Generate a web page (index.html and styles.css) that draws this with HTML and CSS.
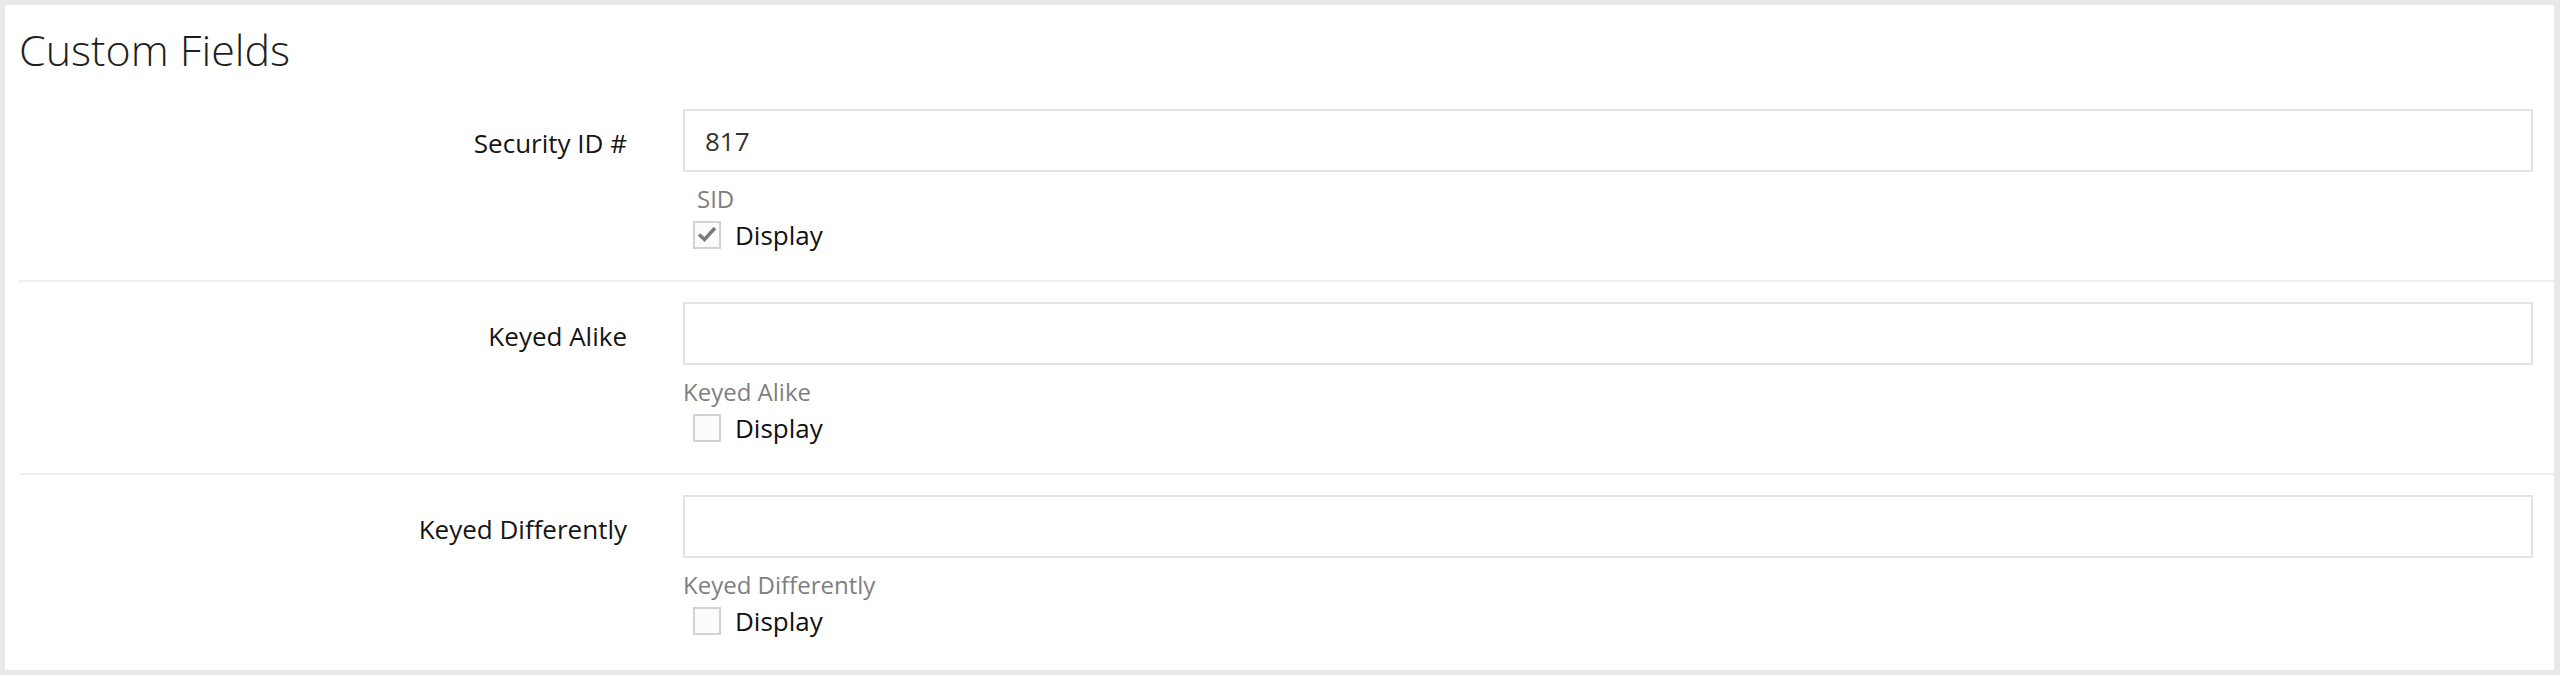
FILE: index.html
```html
<!DOCTYPE html>
<html lang="en">
<head>
<meta charset="UTF-8" />
<meta name="viewport" content="width=device-width, initial-scale=1" />
<title>Custom Fields</title>
<link rel="stylesheet" href="styles.css">
</head>
<body>

<div class="panel">
  <h2>Custom Fields</h2>

  <!-- Security ID -->
  <div class="field-row">
    <label class="field-label" for="cf-sid">Security ID #</label>
    <div class="field-body">
      <input type="text" id="cf-sid" class="field-input" value="817" />
      <div class="help help-indent">SID</div>
      <div class="check-line">
        <span class="box checked">
          <svg viewBox="0 0 24 24" width="24" height="24"><path d="M4 11.5 L9.5 16.5 L20 5" fill="none" stroke="#7b7b7b" stroke-width="3.5"/></svg>
        </span>
        <span class="check-text">Display</span>
      </div>
    </div>
  </div>

  <!-- Keyed Alike -->
  <div class="field-row">
    <label class="field-label" for="cf-ka">Keyed Alike</label>
    <div class="field-body">
      <input type="text" id="cf-ka" class="field-input" value="" />
      <div class="help">Keyed Alike</div>
      <div class="check-line">
        <span class="box"></span>
        <span class="check-text">Display</span>
      </div>
    </div>
  </div>

  <!-- Keyed Differently -->
  <div class="field-row last">
    <label class="field-label" for="cf-kd">Keyed Differently</label>
    <div class="field-body">
      <input type="text" id="cf-kd" class="field-input" value="" />
      <div class="help">Keyed Differently</div>
      <div class="check-line">
        <span class="box"></span>
        <span class="check-text">Display</span>
      </div>
    </div>
  </div>

</div>

</body>
</html>
```

FILE: styles.css
```css
body {
  margin: 0;
  padding: 5px 6px 5px 5px;
  background: #e8e8e8;
  font-family: "Open Sans", Arial, sans-serif;
  height: 100vh;
  box-sizing: border-box;
}
.panel {
  background: white;
  height: 100%;
  padding: 16px 0 0 14px;
  box-sizing: border-box;
}
h2 {
  margin: 0 0 11px;
  font-size: 43px;
  font-weight: 300;
  line-height: 57px;
  color: #1e1e1e;
}
.field-row {
  display: grid;
  grid-template-columns: 664px 1fr;
  padding: 20px 21px 27px 0;
  border-bottom: 2px solid #efefef;
}
.field-row.last {
  border-bottom: none;
}
.field-label {
  text-align: right;
  padding: 3px 56px 0 0;
  font-size: 26px;
  line-height: 63px;
  color: #151515;
}
.field-input {
  display: block;
  width: 100%;
  height: 63px;
  box-sizing: border-box;
  border: 2px solid #e4e4e4;
  padding: 0 20px;
  font-family: "Open Sans", Arial, sans-serif;
  font-size: 26px;
  color: #333;
  outline: none;
}
.help {
  margin-top: 10px;
  font-size: 24px;
  line-height: 33px;
  color: #7f7f7f;
}
.help-indent {
  padding-left: 14px;
}
.check-line {
  display: flex;
  align-items: center;
  margin-top: 2px;
  padding-left: 10px;
  height: 36px;
}
.box {
  width: 28px;
  height: 28px;
  box-sizing: border-box;
  border: 2px solid #d2d2d2;
  background: #fbfbfb;
  display: flex;
}
.check-text {
  margin-left: 14px;
  font-size: 26px;
  color: #111;
}
```
